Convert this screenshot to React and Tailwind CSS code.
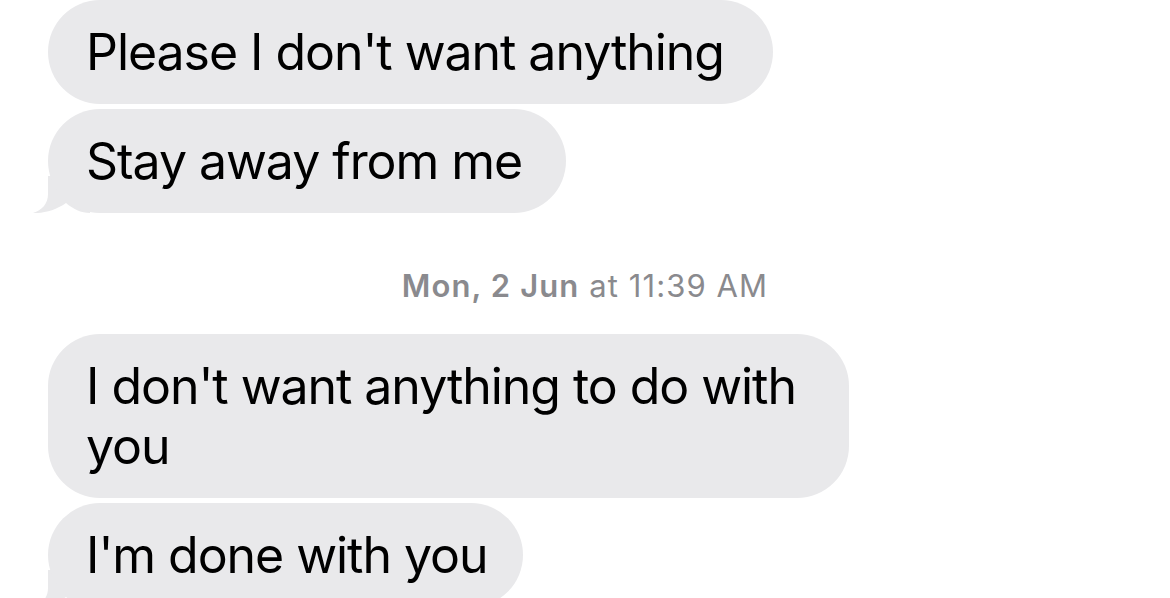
import React from "react";

function Tail() {
  return (
    <svg
      className="absolute left-[-15px] bottom-0"
      width="57"
      height="37"
      viewBox="0 0 57 37"
    >
      <path
        d="M15 0 L15 18 C15 28 9 34 0 37 C11 37.5 23 34 33 27 C40 33 48 37 57 37 L57 0 Z"
        fill="#e9e9eb"
      />
    </svg>
  );
}

function Bubble({ children, w, tail }) {
  return (
    <div className={`relative ${w}`}>
      {tail && <Tail />}
      <div className="relative bg-[#e9e9eb] rounded-[52px] pl-[38px] pr-[20px] py-[22px] text-[50px] leading-[60px] tracking-[-1.05px] text-black whitespace-nowrap">
        {children}
      </div>
    </div>
  );
}

export default function App() {
  return (
    <div
      className="w-[1170px] h-[598px] overflow-hidden bg-white"
      style={{ fontFamily: "Inter, 'Noto Sans', sans-serif" }}
    >
      <div className="flex flex-col pl-[48px]">
        <div className="flex flex-col gap-[5px]">
          <Bubble w="w-[725px]">Please I don't want anything</Bubble>
          <Bubble w="w-[518px]" tail>
            Stay away from me
          </Bubble>
        </div>
        <div className="mt-[56px] mb-[31px] -ml-[48px] text-center text-[31px] leading-[34px] tracking-[1.1px] text-[#8a8a8e]">
          <span className="font-semibold">Mon, 2 Jun</span>
          <span> at 11:39 AM</span>
        </div>
        <div className="flex flex-col gap-[5px]">
          <Bubble w="w-[801px]">
            I don't want anything to do with
            <br />
            you
          </Bubble>
          <Bubble w="w-[475px]" tail>
            I'm done with you
          </Bubble>
        </div>
      </div>
    </div>
  );
}
